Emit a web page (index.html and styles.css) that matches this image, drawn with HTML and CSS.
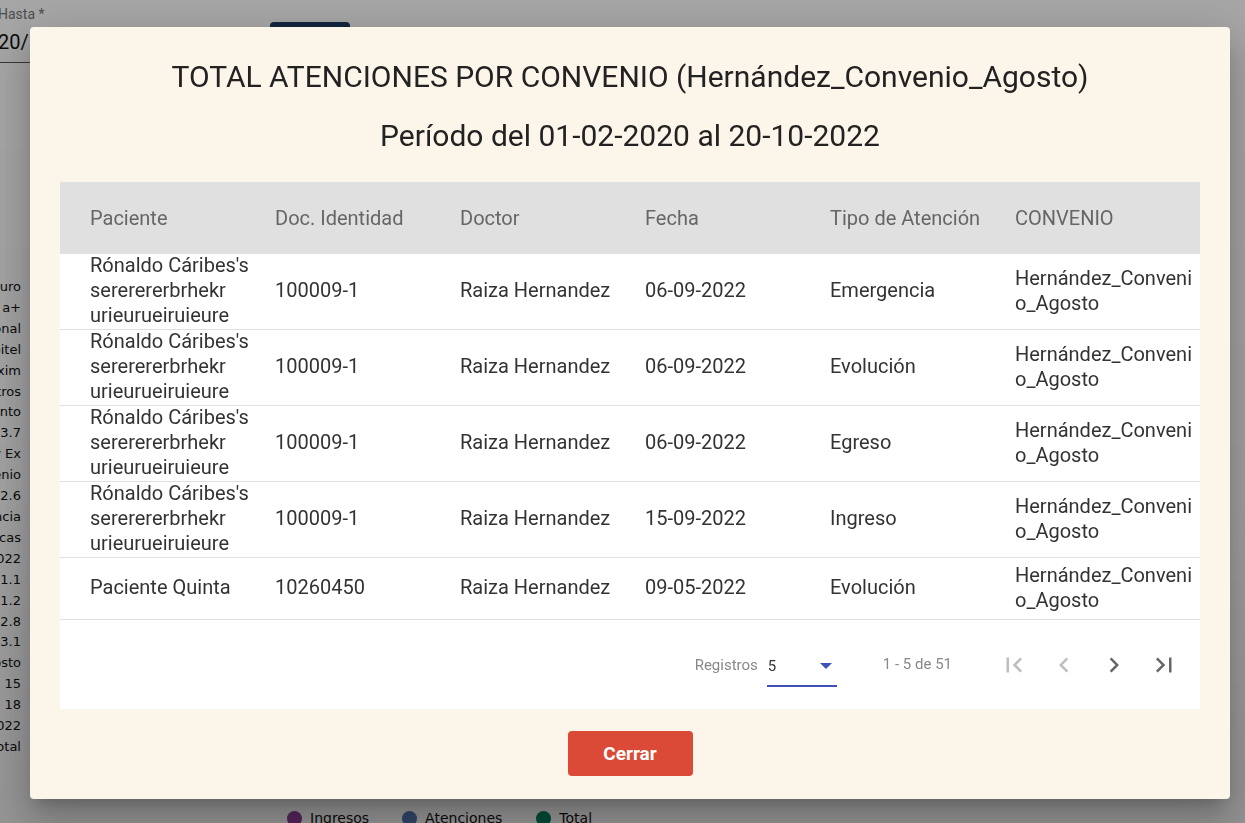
FILE: index.html
```html
<!DOCTYPE html>
<html lang="es">
<head>
<meta charset="utf-8">
<title>Total atenciones por convenio</title>
<link rel="stylesheet" href="styles.css">
</head>
<body>
<div class="page">
  <div class="filters">
    <div class="field">
      <div class="field-label">Hasta *</div>
      <div class="field-value">20/10/2022</div>
    </div>
    <div class="btn-navy">Buscar</div>
  </div>
  <div class="chart">
    <div class="labels">
      <div>Seguro</div><div>Salud a+</div><div>Nacional</div><div>Hospitel</div><div>Maxim</div><div>Otros</div><div>Descuento</div><div>3.7</div><div>Conv Ex</div><div>Convenio</div><div>2.6</div><div>Emergencia</div><div>Clinicas</div><div>2022</div><div>1.1</div><div>1.2</div><div>2.8</div><div>3.1</div><div>Agosto</div><div>15</div><div>18</div><div>2022</div><div>Total</div>
    </div>
  </div>
  <div class="legend">
    <span class="leg"><i class="dot purple"></i>Ingresos</span>
    <span class="leg"><i class="dot blue"></i>Atenciones</span>
    <span class="leg"><i class="dot green"></i>Total</span>
  </div>
</div>

<div class="overlay"></div>

<div class="dialog">
  <h1 class="title">TOTAL ATENCIONES POR CONVENIO (Hernández_Convenio_Agosto)</h1>
  <h2 class="subtitle">Período del 01-02-2020 al 20-10-2022</h2>

  <div class="table-wrap">
    <div class="row head">
      <div class="cell">Paciente</div>
      <div class="cell">Doc. Identidad</div>
      <div class="cell">Doctor</div>
      <div class="cell">Fecha</div>
      <div class="cell">Tipo de Atención</div>
      <div class="cell">CONVENIO</div>
    </div>
    <div class="row">
      <div class="cell">Rónaldo Cáribes's sererererbrhekr urieurueiruieure</div>
      <div class="cell">100009-1</div>
      <div class="cell">Raiza Hernandez</div>
      <div class="cell">06-09-2022</div>
      <div class="cell">Emergencia</div>
      <div class="cell">Hernández_Convenio_Agosto</div>
    </div>
    <div class="row">
      <div class="cell">Rónaldo Cáribes's sererererbrhekr urieurueiruieure</div>
      <div class="cell">100009-1</div>
      <div class="cell">Raiza Hernandez</div>
      <div class="cell">06-09-2022</div>
      <div class="cell">Evolución</div>
      <div class="cell">Hernández_Convenio_Agosto</div>
    </div>
    <div class="row">
      <div class="cell">Rónaldo Cáribes's sererererbrhekr urieurueiruieure</div>
      <div class="cell">100009-1</div>
      <div class="cell">Raiza Hernandez</div>
      <div class="cell">06-09-2022</div>
      <div class="cell">Egreso</div>
      <div class="cell">Hernández_Convenio_Agosto</div>
    </div>
    <div class="row">
      <div class="cell">Rónaldo Cáribes's sererererbrhekr urieurueiruieure</div>
      <div class="cell">100009-1</div>
      <div class="cell">Raiza Hernandez</div>
      <div class="cell">15-09-2022</div>
      <div class="cell">Ingreso</div>
      <div class="cell">Hernández_Convenio_Agosto</div>
    </div>
    <div class="row">
      <div class="cell">Paciente Quinta</div>
      <div class="cell">10260450</div>
      <div class="cell">Raiza Hernandez</div>
      <div class="cell">09-05-2022</div>
      <div class="cell">Evolución</div>
      <div class="cell">Hernández_Convenio_Agosto</div>
    </div>

    <div class="paginator">
      <span class="pg-label">Registros</span>
      <div class="pg-select">
        <span>5</span>
        <svg class="caret" width="14" height="8" viewBox="0 0 14 8"><path d="M1 1h12L7 7z" fill="#3f51b5"/></svg>
      </div>
      <span class="pg-range">1 - 5 de 51</span>
      <div class="pg-buttons">
        <svg class="pg-icon off" width="30" height="30" viewBox="0 0 24 24"><path d="M18.41 16.59L13.82 12l4.59-4.59L17 6l-6 6 6 6zM6 6h2v12H6z" fill="currentColor"/></svg>
        <svg class="pg-icon off" width="30" height="30" viewBox="0 0 24 24"><path d="M15.41 7.41L14 6l-6 6 6 6 1.41-1.41L10.83 12z" fill="currentColor"/></svg>
        <svg class="pg-icon on" width="30" height="30" viewBox="0 0 24 24"><path d="M10 6L8.59 7.41 13.17 12l-4.58 4.59L10 18l6-6z" fill="currentColor"/></svg>
        <svg class="pg-icon on" width="30" height="30" viewBox="0 0 24 24"><path d="M5.59 7.41L10.18 12l-4.59 4.59L7 18l6-6-6-6zM16 6h2v12h-2z" fill="currentColor"/></svg>
      </div>
    </div>
  </div>

  <div class="actions">
    <button class="btn-close">Cerrar</button>
  </div>
</div>
</body>
</html>
```
FILE: styles.css
```css
html, body {
  margin: 0;
  padding: 0;
  height: 100%;
  overflow: hidden;
}
body {
  font-family: Roboto, "Liberation Sans", Arial, sans-serif;
  background: #fff;
}
.page {
  width: 1245px;
  height: 823px;
  position: relative;
}
.filters {
  display: flex;
  align-items: flex-start;
  gap: 20px;
  margin-left: -12px;
  padding-top: 6px;
}
.field {
  width: 262px;
  border-bottom: 1px solid #555;
  height: 56px;
}
.field-label {
  font-size: 14px;
  color: #777;
  padding-left: 10px;
}
.field-value {
  font-size: 20px;
  color: #111;
  margin-top: 8px;
  padding-left: 10px;
}
.btn-navy {
  margin-top: 16px;
  width: 80px;
  height: 40px;
  border-radius: 4px;
  background: #1c3a5e;
  color: #fff;
  font-size: 14px;
  display: flex;
  align-items: center;
  justify-content: center;
}
.chart {
  margin-top: 214px;
  width: 21px;
  overflow: hidden;
}
.labels {
  width: 120px;
  margin-left: -99px;
  text-align: right;
  font-family: "DejaVu Sans", Verdana, sans-serif;
  font-size: 13px;
  line-height: 20.9px;
  color: #111;
}
.legend {
  position: absolute;
  left: 287px;
  top: 810px;
  display: flex;
  gap: 20px;
  font-family: "DejaVu Sans", Verdana, sans-serif;
  font-size: 14px;
  color: #111;
}
.leg {
  display: flex;
  align-items: center;
  gap: 8px;
}
.leg:nth-child(2) { margin-left: 13px; }
.leg:nth-child(3) { margin-left: 14px; }
.dot {
  display: inline-block;
  width: 15px;
  height: 15px;
  border-radius: 50%;
}
.purple { background: #8e3f9a; }
.blue { background: #5576b0; }
.green { background: #00805e; }

.overlay {
  position: fixed;
  inset: 0;
  background: linear-gradient(to bottom, rgba(0,0,0,0.35) 0%, rgba(0,0,0,0.37) 60%, rgba(0,0,0,0.42) 100%);
}
.dialog {
  position: fixed;
  left: 30px;
  top: 27px;
  width: 1200px;
  height: 772px;
  box-sizing: border-box;
  background: #fcf5ea;
  border-radius: 4px;
  box-shadow: 0 11px 15px -7px rgba(0,0,0,.2), 0 24px 38px 3px rgba(0,0,0,.14), 0 9px 46px 8px rgba(0,0,0,.12);
  padding: 30px 30px 0 30px;
  display: flex;
  flex-direction: column;
}
.title {
  margin: 0;
  text-align: center;
  font-weight: 400;
  font-size: 30px;
  line-height: 40px;
  color: #222;
}
.subtitle {
  margin: 18px 0 0 0;
  text-align: center;
  font-weight: 400;
  font-size: 30px;
  line-height: 42px;
  color: #222;
}
.table-wrap {
  margin-top: 25px;
  background: #fff;
}
.row {
  display: grid;
  grid-template-columns: 215px 185px 185px 185px 185px 185px;
  align-items: center;
  min-height: 61px;
  border-bottom: 1px solid #e0e0e0;
  font-size: 20px;
  line-height: 25px;
  color: #333;
}
.row.head {
  background: #e0e0e0;
  color: #666;
  min-height: 72px;
  border-bottom: 0;
}
.row:not(.head) .cell { position: relative; top: -1px; }
.cell {
  padding-right: 4px;
  overflow-wrap: anywhere;
}
.cell:first-child {
  padding-left: 30px;
}
.paginator {
  height: 89px;
  display: flex;
  align-items: center;
  justify-content: flex-end;
  font-size: 15px;
  color: #888;
  padding-right: 21px;
}
.pg-label {
  margin-right: 10px;
}
.pg-select {
  width: 70px;
  height: 40px;
  box-sizing: border-box;
  border-bottom: 2px solid #3f51b5;
  display: flex;
  align-items: center;
  justify-content: space-between;
  padding: 0 2px 0 1px;
  color: #333;
  margin-top: 4px;
  margin-left: -1px;
}
.caret { margin-right: 2px; }
.pg-range {
  margin-left: 46px;
  position: relative;
  top: -1px;
}
.pg-buttons {
  display: flex;
  gap: 20px;
  margin-left: 47px;
}
.pg-icon { display: block; }
.pg-icon.off { color: #bdbdbd; }
.pg-icon.on { color: #666; }
.actions {
  display: flex;
  justify-content: center;
  margin-top: 22px;
}
.btn-close {
  width: 125px;
  height: 45px;
  border: 0;
  border-radius: 4px;
  background: #da4a37;
  color: #fff;
  font-family: Roboto, "Liberation Sans", Arial, sans-serif;
  font-weight: 700;
  font-size: 19px;
}
```
